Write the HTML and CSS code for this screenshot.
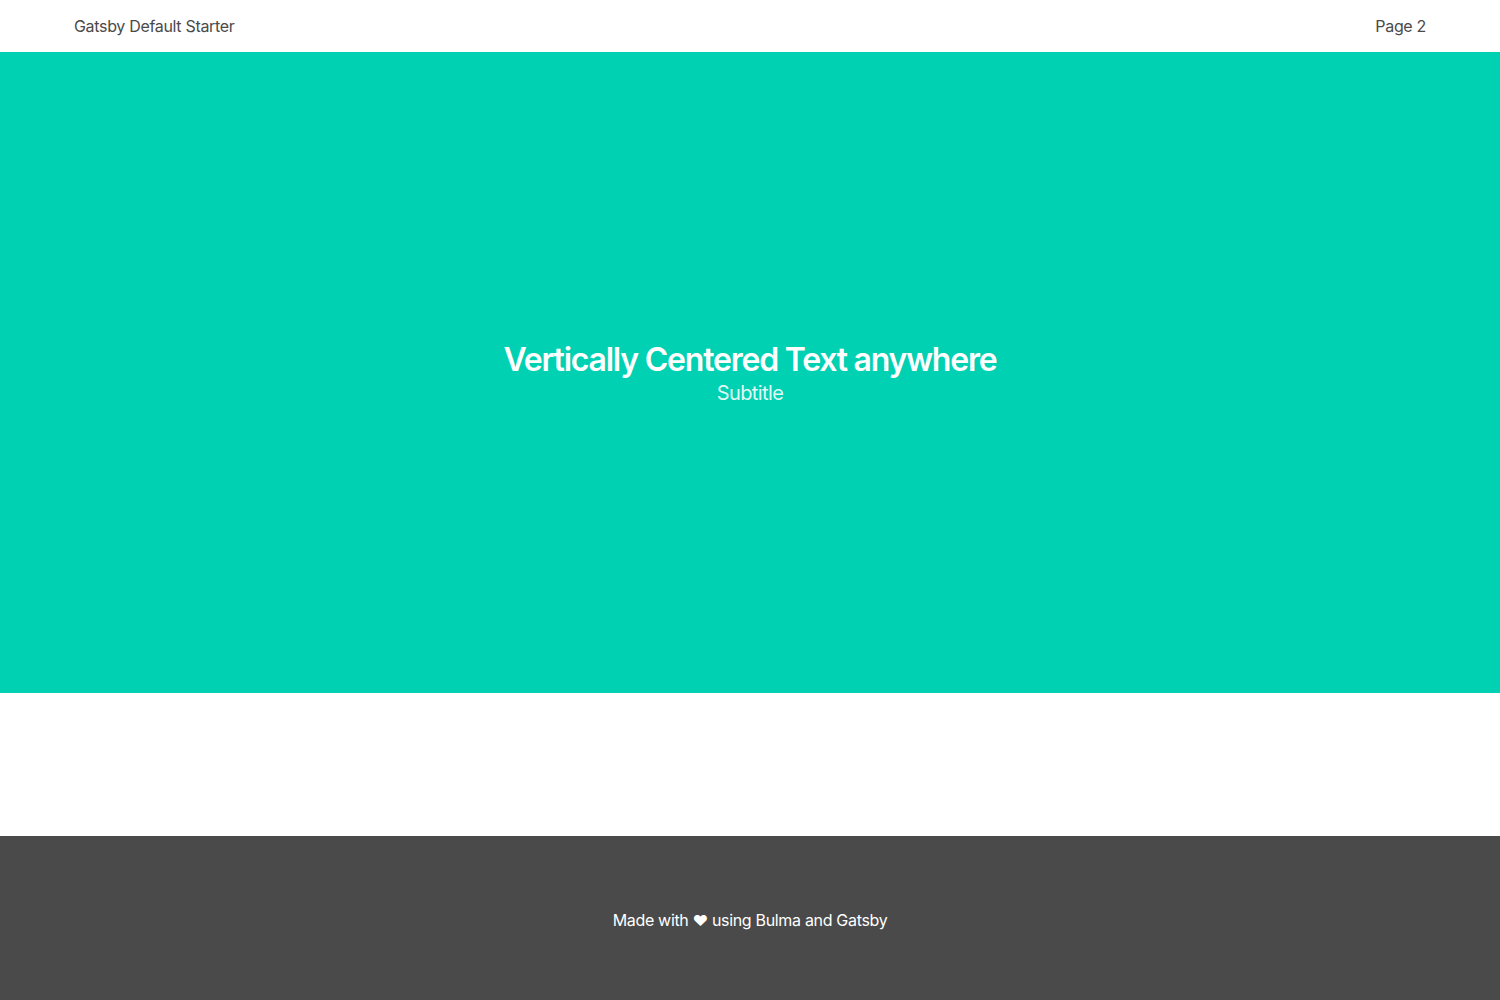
FILE: index.html
```html
<!DOCTYPE html>
<html lang="en">
<head>
<meta charset="utf-8">
<title>Gatsby Default Starter</title>
<link rel="stylesheet" href="styles.css">
</head>
<body>
<nav class="navbar">
  <a class="navbar-item" href="#">Gatsby Default Starter</a>
  <a class="navbar-item" href="#">Page 2</a>
</nav>
<section class="hero">
  <div class="hero-body">
    <h1 class="title">Vertically Centered Text anywhere</h1>
    <h2 class="subtitle">Subtitle</h2>
  </div>
</section>
<div class="spacer"></div>
<footer class="footer">
  <p>Made with <span class="heart">❤</span> using Bulma and Gatsby</p>
</footer>
</body>
</html>
```

FILE: styles.css
```css
* { box-sizing: border-box; }
html, body { margin: 0; padding: 0; }
body {
  font-family: Inter, "Noto Sans", "Liberation Sans", sans-serif;
  font-size: 16px;
  color: #4a4a4a;
  background: #fff;
  letter-spacing: -0.02em;
}
.navbar {
  height: 52px;
  display: flex;
  justify-content: space-between;
  align-items: center;
  padding: 0 74px;
}
.navbar-item {
  color: #4a4a4a;
  text-decoration: none;
  font-size: 16px;
  line-height: 24px;
}
.hero {
  background: #00d1b2;
  height: 641px;
  display: flex;
  align-items: center;
  justify-content: center;
}
.hero-body {
  text-align: center;
  padding-top: 4px;
}
.title {
  margin: 0;
  color: #fff;
  font-size: 32px;
  font-weight: 600;
  line-height: 36px;
  letter-spacing: -0.038em;
}
.subtitle {
  margin: 0;
  color: rgba(255,255,255,0.9);
  font-size: 20px;
  font-weight: 400;
  line-height: 30px;
  letter-spacing: -0.03em;
}
.spacer { height: 143px; }
.footer {
  background: #4a4a4a;
  height: 164px;
  padding-top: 72px;
  text-align: center;
}
.footer p {
  margin: 0;
  color: #fff;
  font-size: 16px;
  line-height: 24px;
}
.heart { font-size: 15px; }
```
